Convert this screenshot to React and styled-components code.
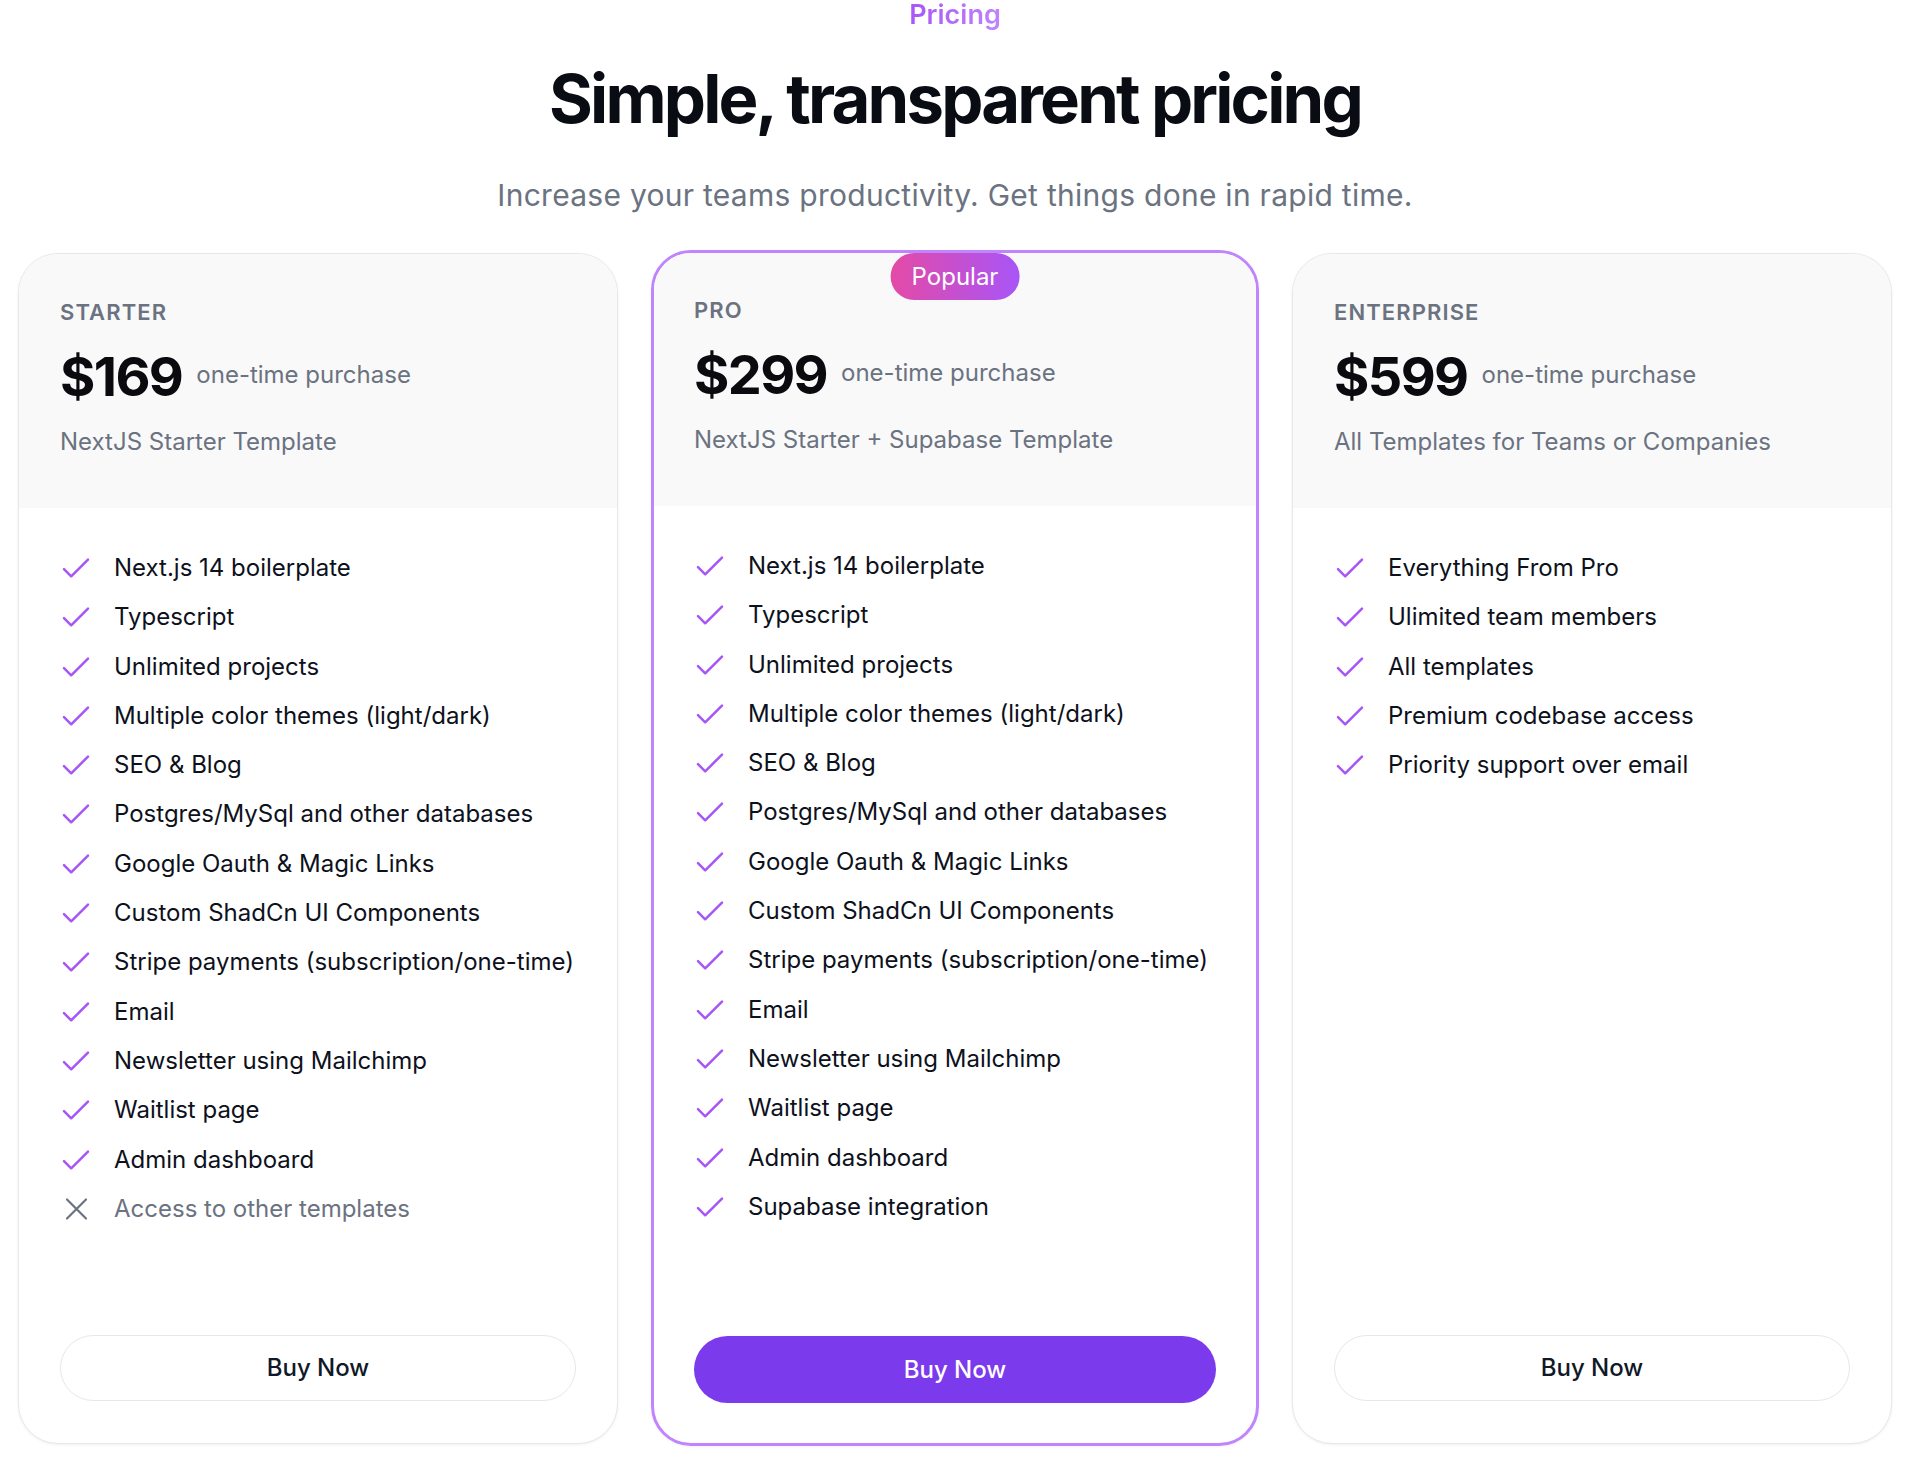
import React from "react";
import styled, { createGlobalStyle } from "styled-components";

const GlobalStyle = createGlobalStyle`
  body {
    margin: 0;
    background: #ffffff;
    font-family: Inter, "Noto Sans", "Liberation Sans", sans-serif;
    -webkit-font-smoothing: antialiased;
  }
  * {
    box-sizing: border-box;
  }
`;

const base = [
  "Next.js 14 boilerplate",
  "Typescript",
  "Unlimited projects",
  "Multiple color themes (light/dark)",
  "SEO & Blog",
  "Postgres/MySql and other databases",
  "Google Oauth & Magic Links",
  "Custom ShadCn UI Components",
  "Stripe payments (subscription/one-time)",
  "Email",
  "Newsletter using Mailchimp",
  "Waitlist page",
  "Admin dashboard",
];

const plans = [
  {
    tier: "Starter",
    price: "$169",
    blurb: "NextJS Starter Template",
    features: [...base.map((t) => ({ t })), { t: "Access to other templates", off: true }],
  },
  {
    tier: "Pro",
    price: "$299",
    blurb: "NextJS Starter + Supabase Template",
    featured: true,
    features: [...base.map((t) => ({ t })), { t: "Supabase integration" }],
  },
  {
    tier: "Enterprise",
    price: "$599",
    blurb: "All Templates for Teams or Companies",
    features: [
      { t: "Everything From Pro" },
      { t: "Ulimited team members" },
      { t: "All templates" },
      { t: "Premium codebase access" },
      { t: "Priority support over email" },
    ],
  },
];

const Page = styled.main`
  padding: 0 28px 19px 18px;
`;

const Intro = styled.header`
  display: flex;
  flex-direction: column;
  align-items: center;
  text-align: center;
`;

const Eyebrow = styled.p`
  margin: 0;
  font-size: 27px;
  line-height: 30px;
  font-weight: 600;
  background: linear-gradient(90deg, #a855f7, #c084fc);
  -webkit-background-clip: text;
  background-clip: text;
  color: transparent;
`;

const Title = styled.h1`
  margin: 32px 0 0;
  font-size: 67px;
  line-height: 74px;
  font-weight: 700;
  letter-spacing: -0.042em;
  color: #0a0c14;
`;

const Lead = styled.p`
  margin: 39px 0 0;
  font-size: 30px;
  line-height: 40px;
  letter-spacing: 0.27px;
  color: #6b7280;
`;

const Plans = styled.section`
  display: grid;
  grid-template-columns: repeat(3, 1fr);
  gap: 37px;
  margin-top: 38px;
`;

const Card = styled.article`
  position: relative;
  display: flex;
  flex-direction: column;
  overflow: hidden;
  background: #ffffff;
  border-radius: 40px;
  border: ${(p) => (p.$featured ? "3px solid #c084fc" : "1px solid #e7e7ec")};
  margin: ${(p) => (p.$featured ? "-3px -4px -2px" : "0")};
  box-shadow: 0 1px 3px rgba(17, 24, 39, 0.06);
`;

const Badge = styled.span`
  position: absolute;
  top: 0;
  left: 50%;
  transform: translateX(-50%);
  height: 47px;
  padding: 0 21px;
  border-radius: 999px;
  background: linear-gradient(90deg, #e44aa6, #a855f7);
  color: #ffffff;
  font-size: 24px;
  line-height: 47px;
  white-space: nowrap;
`;

const CardHead = styled.div`
  background: #f9f9fa;
  padding: ${(p) => (p.$featured ? "41px 40px 50px" : "42px 41px 50px")};
`;

const Tier = styled.h3`
  margin: 0;
  font-size: 22px;
  line-height: 33px;
  font-weight: 600;
  letter-spacing: 0.05em;
  text-transform: uppercase;
  color: #6b7280;
`;

const PriceRow = styled.div`
  display: flex;
  align-items: center;
  gap: 14px;
  margin-top: 21px;
`;

const Amount = styled.span`
  font-size: 54px;
  line-height: 54px;
  font-weight: 700;
  letter-spacing: -0.03em;
  color: #0a0a0f;
`;

const Period = styled.span`
  font-size: 24px;
  line-height: 32px;
  padding-bottom: 5px;
  color: #6b7280;
`;

const Blurb = styled.p`
  margin: 22px 0 0;
  font-size: 24px;
  line-height: 32px;
  color: #6b7280;
`;

const Features = styled.ul`
  list-style: none;
  margin: 0;
  padding: ${(p) => (p.$featured ? "44px 40px 0" : "44px 41px 0")};
  display: flex;
  flex-direction: column;
  gap: 17.3px;
`;

const Feature = styled.li`
  display: flex;
  align-items: center;
  gap: 24px;
  font-size: 24px;
  line-height: 32px;
  white-space: nowrap;
  color: ${(p) => (p.$off ? "#6b7280" : "#0d111c")};
`;

const Footer = styled.div`
  margin-top: auto;
  padding: ${(p) => (p.$featured ? "110px 40px 40px" : "110px 41px 42px")};
`;

const BuyButton = styled.button`
  display: block;
  width: 100%;
  height: ${(p) => (p.$primary ? "67px" : "66px")};
  border-radius: 999px;
  font-family: inherit;
  font-size: 24px;
  font-weight: 500;
  cursor: pointer;
  background: ${(p) => (p.$primary ? "#7c3aed" : "#ffffff")};
  color: ${(p) => (p.$primary ? "#ffffff" : "#111827")};
  border: ${(p) => (p.$primary ? "none" : "1.5px solid #e5e7eb")};
`;

const CheckIcon = () => (
  <svg width="30" height="32" viewBox="0 0 30 32" fill="none">
    <path
      d="M4 17.2 L11.2 24.3 L28 7.6"
      stroke="#a855f7"
      strokeWidth="2.5"
      strokeLinecap="round"
      strokeLinejoin="round"
    />
  </svg>
);

const CrossIcon = () => (
  <svg width="30" height="32" viewBox="0 0 30 32" fill="none">
    <path
      d="M7 6.5 L26 25.5 M26 6.5 L7 25.5"
      stroke="#6b7280"
      strokeWidth="2.2"
      strokeLinecap="round"
    />
  </svg>
);

const PlanCard = ({ plan }) => (
  <Card $featured={plan.featured}>
    {plan.featured && <Badge>Popular</Badge>}
    <CardHead $featured={plan.featured}>
      <Tier>{plan.tier}</Tier>
      <PriceRow>
        <Amount>{plan.price}</Amount>
        <Period>one-time purchase</Period>
      </PriceRow>
      <Blurb>{plan.blurb}</Blurb>
    </CardHead>
    <Features $featured={plan.featured}>
      {plan.features.map((f) => (
        <Feature key={f.t} $off={f.off}>
          {f.off ? <CrossIcon /> : <CheckIcon />}
          {f.t}
        </Feature>
      ))}
    </Features>
    <Footer $featured={plan.featured}>
      <BuyButton $primary={plan.featured}>Buy Now</BuyButton>
    </Footer>
  </Card>
);

export default function App() {
  return (
    <>
      <GlobalStyle />
      <Page>
        <Intro>
          <Eyebrow>Pricing</Eyebrow>
          <Title>Simple, transparent pricing</Title>
          <Lead>Increase your teams productivity. Get things done in rapid time.</Lead>
        </Intro>
        <Plans>
          {plans.map((p) => (
            <PlanCard key={p.tier} plan={p} />
          ))}
        </Plans>
      </Page>
    </>
  );
}
